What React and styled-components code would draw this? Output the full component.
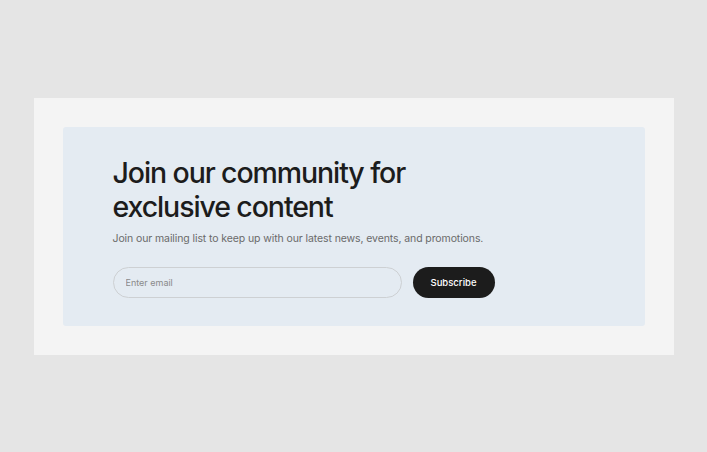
import styled, { createGlobalStyle } from 'styled-components';

const GlobalStyle = createGlobalStyle`
    html, body {
        margin: 0;
        background: #e5e5e5;
        font-family: Inter, "Noto Sans", sans-serif;
    }
`;

const Page = styled.div`
    display: flex;
    justify-content: center;
    align-items: flex-start;
    padding-top: 98px;
    min-height: 452px;
    box-sizing: border-box;
`;

const Panel = styled.section`
    width: 640px;
    padding: 29px;
    box-sizing: border-box;
    background: #f4f4f4;
`;

const Card = styled.div`
    background: #e4ebf2;
    border-radius: 3px;
    padding: 29px 50px 28px 50px;
    display: flex;
    flex-direction: column;
`;

const Heading = styled.h2`
    margin: 0;
    font-size: 28.5px;
    line-height: 34px;
    font-weight: 500;
    letter-spacing: -1.1px;
    color: #1c1c1c;
    max-width: 310px;
`;

const Lead = styled.p`
    margin: 8px 0 0;
    font-size: 10.5px;
    line-height: 14px;
    color: #6a6a6a;
    letter-spacing: -0.1px;
`;

const Form = styled.form`
    display: flex;
    gap: 11px;
    margin-top: 21px;
`;

const EmailInput = styled.input`
    width: 289px;
    height: 31px;
    box-sizing: border-box;
    border: 1px solid #cdd0d3;
    border-radius: 999px;
    background: transparent;
    padding: 0 12px;
    font-family: inherit;
    font-size: 9px;
    color: #333;
    outline: none;

    &::placeholder {
        color: #8a8a8a;
    }
`;

const Button = styled.button`
    width: 82px;
    height: 31px;
    border: none;
    border-radius: 999px;
    background: #1c1c1c;
    color: #fff;
    font-family: inherit;
    font-size: 9.5px;
    font-weight: 500;
    cursor: pointer;
`;

const App = () => {
    return (
        <>
            <GlobalStyle />
            <Page>
                <Panel>
                    <Card>
                        <Heading>Join our community for exclusive content</Heading>
                        <Lead>Join our mailing list to keep up with our latest news, events, and promotions.</Lead>
                        <Form onSubmit={e => e.preventDefault()}>
                            <EmailInput type="email" placeholder="Enter email" />
                            <Button type="submit">Subscribe</Button>
                        </Form>
                    </Card>
                </Panel>
            </Page>
        </>
    );
};

export default App;
